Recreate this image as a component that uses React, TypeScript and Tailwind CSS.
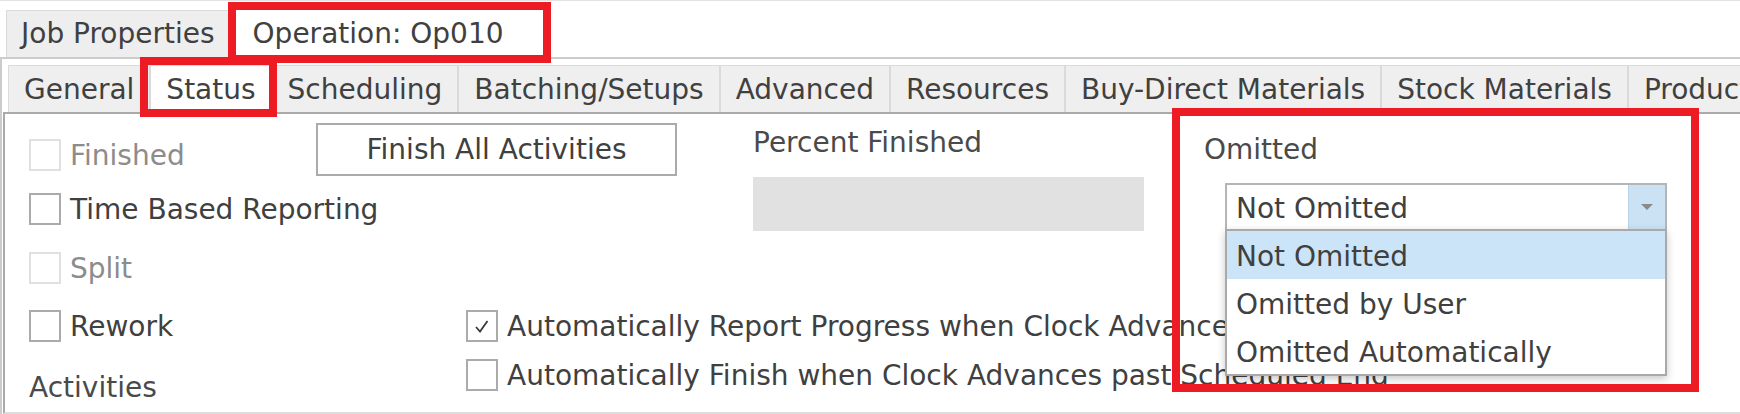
import React from "react";

const subTabs = [
  "General",
  "Status",
  "Scheduling",
  "Batching/Setups",
  "Advanced",
  "Resources",
  "Buy-Direct Materials",
  "Stock Materials",
  "Products",
];

function CheckBox({ checked = false, disabled = false }: { checked?: boolean; disabled?: boolean }) {
  return (
    <div
      className={`flex h-[32px] w-[32px] shrink-0 items-center justify-center border-2 bg-white ${
        disabled ? "border-[#e0e0e0]" : "border-[#ababab]"
      }`}
    >
      {checked && (
        <svg width="20" height="20" viewBox="0 0 20 20">
          <polyline points="4,11 8,15.5 15.5,5" fill="none" stroke="#3a3a3a" strokeWidth="1.8" />
        </svg>
      )}
    </div>
  );
}

function CheckRow({
  label,
  checked,
  disabled,
  className = "",
}: {
  label: string;
  checked?: boolean;
  disabled?: boolean;
  className?: string;
}) {
  return (
    <div className={`flex h-[32px] items-center gap-[9px] whitespace-nowrap ${className}`}>
      <CheckBox checked={checked} disabled={disabled} />
      <span className={`pt-[2px] leading-[32px] ${disabled ? "text-[#8c8c8c]" : "text-[#404040]"}`}>{label}</span>
    </div>
  );
}

export default function App() {
  return (
    <div className="relative h-[414px] w-[1740px] overflow-hidden bg-white font-['DejaVu_Sans',sans-serif] text-[28px] text-[#404040]">
      {/* top level tabs */}
      <div className="flex h-[57px] items-end border-t border-[#e3e3e3] pl-[6px]">
        <div className="flex h-[47px] items-center border border-b-0 border-[#dadada] bg-[#eeeeee] px-[14px] whitespace-nowrap">
          Job Properties
        </div>
        <div className="flex h-[47px] items-center bg-white pl-[23px] pr-[40px] whitespace-nowrap">
          Operation: Op010
        </div>
      </div>

      <div className="border-l-2 border-t-2 border-[#cccccc] pt-[6px]">
        {/* sub tabs */}
        <div className="flex h-[47px] pl-[6px]">
          {subTabs.map((t) => (
            <div
              key={t}
              className={`flex h-[47px] shrink-0 items-center border border-b-0 border-[#dadada] px-[15px] pt-[2px] whitespace-nowrap ${
                t === "Status" ? "bg-white" : "bg-[#efefef]"
              }`}
            >
              {t}
            </div>
          ))}
        </div>

        {/* status panel */}
        <div className="ml-[1px] h-[302px] border-2 border-r-0 border-[#aaaaaa] border-b-[#dddddd] pl-[24px] pt-[9px]">
          <div className="flex items-start">
            <div className="w-[287px]">
              <CheckRow label="Finished" disabled className="mt-[16px]" />
              <CheckRow label="Time Based Reporting" className="mt-[22px]" />
              <CheckRow label="Split" disabled className="mt-[27px]" />
            </div>

            <button className="flex h-[53px] w-[361px] items-center justify-center border-2 border-[#ababab] bg-white text-[#404040]">
              Finish All Activities
            </button>

            <div className="ml-[76px] w-[391px]">
              <div className="mt-[4px] leading-[32px] text-[#4a4a4a]">Percent Finished</div>
              <div className="mt-[18px] h-[54px] bg-[#e1e1e1]" />
            </div>

            <div className="ml-[60px]">
              <div className="mt-[11px] leading-[32px] text-[#4a4a4a]">Omitted</div>
              <div className="relative ml-[21px] mt-[17px] flex h-[48px] w-[442px] border-2 border-[#b5b5b5] bg-white">
                <div className="flex flex-1 items-center pl-[9px] pt-[3px] leading-[32px]">Not Omitted</div>
                <div className="flex w-[37px] items-center justify-center border-l border-[#b9d2e6] bg-[#cbe2f5]">
                  <svg width="12" height="6" viewBox="0 0 12 6">
                    <polygon points="0,0 12,0 6,6" fill="#8a8a8a" />
                  </svg>
                </div>

                <div className="absolute left-[-2px] top-full z-10 w-[442px] border-2 border-[#a9a9a9] bg-white shadow-[0_3px_8px_rgba(0,0,0,0.22)]">
                  <div className="flex h-[48px] items-center bg-[#cce4f7] pl-[9px] pt-[4px]">Not Omitted</div>
                  <div className="flex h-[48px] items-center pl-[9px] pt-[4px]">Omitted by User</div>
                  <div className="flex h-[47px] items-center pl-[9px] pt-[4px]">Omitted Automatically</div>
                </div>
              </div>
            </div>
          </div>

          <div className="flex items-start">
            <div className="w-[437px] shrink-0">
              <CheckRow label="Rework" className="mt-[26px]" />
              <div className="mt-[30px] leading-[32px] text-[#4a4a4a]">Activities</div>
            </div>
            <div>
              <CheckRow
                label="Automatically Report Progress when Clock Advances past Scheduled Start"
                checked
                className="mt-[26px]"
              />
              <CheckRow
                label="Automatically Finish when Clock Advances past Scheduled End"
                className="mt-[17px]"
              />
            </div>
          </div>
        </div>
      </div>

      {/* red annotation frames */}
      <div className="pointer-events-none absolute left-[228px] top-[2px] z-20 h-[61px] w-[323px] border-[8px] border-[#ed1c24]" />
      <div className="pointer-events-none absolute left-[140px] top-[57px] z-20 h-[60px] w-[137px] border-[8px] border-[#ed1c24]" />
      <div className="pointer-events-none absolute left-[1172px] top-[108px] z-20 h-[284px] w-[527px] border-[8px] border-[#ed1c24]" />
    </div>
  );
}
